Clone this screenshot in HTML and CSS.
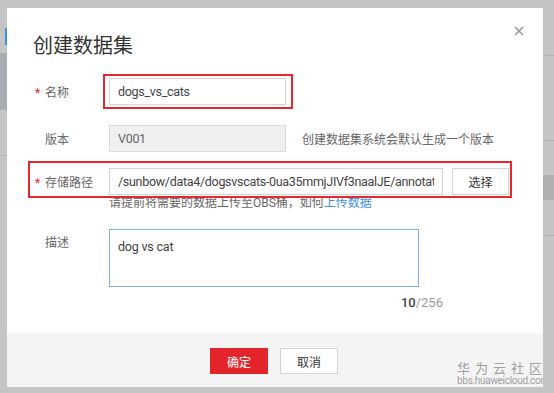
FILE: index.html
```html
<!DOCTYPE html>
<html lang="zh-CN">

<head>
  <meta charset="UTF-8">
  <meta name="viewport" content="width=device-width, initial-scale=1.0">
  <title>创建数据集</title>
  <link rel="stylesheet" href="styles.css">
</head>

<body>
  <div class="dialog">
    <div class="dialog-header">
      <h1>创建数据集</h1>
      <svg class="close" width="10" height="10" viewBox="0 0 10 10">
        <path d="M1 1L9 9M9 1L1 9" stroke="#9a9a9a" stroke-width="1.6" fill="none" />
      </svg>
    </div>

    <form class="dialog-body">
      <div class="row">
        <label class="label"><span class="star">*</span>名称</label>
        <input class="input" type="text" value="dogs_vs_cats">
      </div>
      <div class="row row-version">
        <label class="label">版本</label>
        <input class="input input-disabled" type="text" value="V001" disabled>
        <span class="tip">创建数据集系统会默认生成一个版本</span>
      </div>
      <div class="row row-path">
        <label class="label"><span class="star">*</span>存储路径</label>
        <input class="input input-path" type="text" value="/sunbow/data4/dogsvscats-0ua35mmjJIVf3naalJE/annotation/">
        <button type="button" class="btn-select">选择</button>
      </div>
      <div class="hint">请提前将需要的数据上传至OBS桶，如何<a href="#">上传数据</a></div>
      <div class="row row-desc">
        <label class="label">描述</label>
        <div class="desc-box">
          <textarea class="textarea">dog vs cat</textarea>
          <div class="counter"><b>10</b>/256</div>
        </div>
      </div>
    </form>

    <div class="dialog-footer">
      <button type="button" class="btn btn-ok">确定</button>
      <button type="button" class="btn btn-cancel">取消</button>
    </div>

    <!-- red marks drawn on the screenshot -->
    <div class="mark mark-name"></div>
    <div class="mark mark-path"></div>

    <div class="watermark">
      <div class="wm-title">华为云社区</div>
      <div class="wm-url">bbs.huaweicloud.com</div>
    </div>
  </div>
</body>

</html>
```

FILE: styles.css
```css
* {
  margin: 0;
  padding: 0;
  box-sizing: border-box;
}

body {
  font-family: Roboto, "Noto Sans CJK SC", sans-serif;
  color: #333;
  height: 393px;
  overflow: hidden;
  padding: 8px 0 0 7px;
  background:
    linear-gradient(#a9adb2, #a9adb2) 0 53px / 7px 57px no-repeat,
    linear-gradient(#3d8fe0, #3d8fe0) 5px 28px / 2px 17px no-repeat,
    linear-gradient(#b3b3b3, #b3b3b3) 0 155px / 7px 1px no-repeat,
    linear-gradient(#b3b3b3, #b3b3b3) 543px 55px / 11px 1px no-repeat,
    linear-gradient(#b3b3b3, #b3b3b3) 543px 140px / 11px 1px no-repeat,
    linear-gradient(#b0b0b0, #b0b0b0) 543px 175px / 11px 25px no-repeat,
    linear-gradient(#b3b3b3, #b3b3b3) 543px 235px / 11px 1px no-repeat,
    #c4c4c4;
}

.dialog {
  position: relative;
  width: 536px;
  height: 379px;
  background: #fff;
  overflow: hidden;
  display: flex;
  flex-direction: column;
}

.dialog-header {
  padding: 24px 26px 0;
  height: 70px;
}

.dialog-header h1 {
  font-size: 20px;
  font-weight: normal;
  line-height: 28px;
  color: #333;
}

.close {
  position: absolute;
  top: 18px;
  right: 19px;
}

.dialog-body {
  padding-left: 28px;
  flex: 1;
}

.row {
  display: flex;
  align-items: center;
  margin-bottom: 20px;
}

.row-version {
  margin-bottom: 16px;
}

.row-path {
  margin-bottom: 0;
}

.label {
  width: 74px;
  padding-left: 10px;
  font-size: 12px;
  color: #666;
  flex-shrink: 0;
}

.star {
  display: inline-block;
  width: 10px;
  margin-left: -10px;
  color: #e4242b;
}

.input {
  width: 177px;
  height: 27px;
  border: 1px solid #d5d5d5;
  padding: 0 8px;
  font-family: Roboto, "Noto Sans CJK SC", sans-serif;
  font-size: 12.5px;
  letter-spacing: -0.3px;
  color: #444;
  background: #fff;
  outline: none;
}

.input-disabled {
  background: #f0f0f0;
  color: #666;
  border-color: #dcdcdc;
}

.tip {
  margin-left: 16px;
  font-size: 12px;
  color: #666;
}

.input-path {
  width: 334px;
}

.btn-select {
  margin-left: 9px;
  width: 57px;
  height: 27px;
  border: 1px solid #d5d5d5;
  background: #fff;
  font-family: "Noto Sans CJK SC", sans-serif;
  font-size: 12px;
  color: #333;
}

.hint {
  margin-left: 74px;
  font-size: 12px;
  line-height: 16px;
  color: #666;
  margin-bottom: 18px;
}

.hint a {
  color: #3d8ee8;
  text-decoration: none;
}

.row-desc {
  align-items: flex-start;
}

.row-desc .label {
  line-height: 28px;
}

.desc-box {
  width: 334px;
}

.textarea {
  display: block;
  width: 310px;
  height: 58px;
  border: 1px solid #7fb1ea;
  padding: 9px 8px 0;
  font-family: Roboto, "Noto Sans CJK SC", sans-serif;
  font-size: 12.5px;
  letter-spacing: -0.2px;
  line-height: 16px;
  color: #444;
  resize: none;
  outline: none;
}

.counter {
  margin-top: 8px;
  text-align: right;
  font-size: 13px;
  line-height: 16px;
  color: #999;
}

.counter b {
  font-weight: 500;
  color: #444;
}

.dialog-footer {
  height: 54px;
  background: #f4f4f4;
  display: flex;
  justify-content: center;
  align-items: center;
  gap: 12px;
  padding-top: 2px;
  padding-right: 2px;
}

.btn {
  width: 58px;
  height: 26px;
  font-family: "Noto Sans CJK SC", sans-serif;
  font-size: 12px;
  cursor: pointer;
}

.btn-ok {
  background: #e4242b;
  border: 1px solid #e4242b;
  color: #fff;
}

.btn-cancel {
  background: #fff;
  border: 1px solid #d5d5d5;
  color: #333;
}

.mark {
  position: absolute;
  border: 2px solid #e8262b;
}

.mark-name {
  left: 96px;
  top: 66px;
  width: 190px;
  height: 35px;
}

.mark-path {
  left: 21px;
  top: 153px;
  width: 484px;
  height: 37px;
}

.watermark {
  position: absolute;
  left: 450px;
  top: 352px;
  color: #a0a0a0;
}

.wm-title {
  font-family: "Noto Sans CJK SC", sans-serif;
  font-size: 13px;
  line-height: 15px;
  letter-spacing: 5px;
}

.wm-url {
  font-size: 10px;
  line-height: 11px;
  letter-spacing: -0.3px;
}
```
